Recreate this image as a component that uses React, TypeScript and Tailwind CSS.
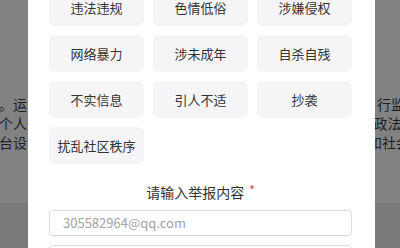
import React from "react";

const font = { fontFamily: '"Noto Sans CJK SC", "Noto Sans", sans-serif' };

const tags = [
  "违法违规",
  "色情低俗",
  "涉嫌侵权",
  "网络暴力",
  "涉未成年",
  "自杀自残",
  "不实信息",
  "引人不适",
  "抄袭",
  "扰乱社区秩序",
];

export default function App() {
  return (
    <div
      className="w-[400px] h-[248px] overflow-hidden flex bg-[#808080]"
      style={font}
    >
      {/* left background strip */}
      <div className="w-[28px] shrink-0 flex flex-col overflow-hidden">
        <div className="h-[203px] bg-[#828282] flex flex-col pt-[95px] text-[14px] leading-[19px] text-[#1e1e1e] whitespace-nowrap">
          <div className="flex justify-end pr-[1px]">。运</div>
          <div className="flex justify-end pr-[1px]">个人</div>
          <div className="flex justify-end pr-[1px]">台设</div>
        </div>
        <div className="flex-1 bg-[#7a7a7a]" />
      </div>

      {/* modal */}
      <div className="w-[347px] shrink-0 bg-white pl-[21px]">
        <div className="w-[303px] grid grid-cols-3 gap-x-[9px] gap-y-[9px] -mt-[11px]">
          {tags.map((t) => (
            <div
              key={t}
              className="h-[37px] rounded-[6px] bg-[#f5f5f7] flex items-center justify-center text-[13px] text-[#333333]"
            >
              {t}
            </div>
          ))}
        </div>
        <div className="w-[303px] mt-[18px] h-[20px] flex justify-center items-center text-[14px] text-[#333333] leading-[20px]">
          <span>请输入举报内容</span>
          <span className="ml-[5px] text-[12px] text-[#d93a3a] leading-none self-start mt-[2px]">
            *
          </span>
        </div>
        <div className="w-[303px] h-[26px] mt-[8px] rounded-[4px] border border-[#dcdcdc] flex items-center pl-[13px] text-[13px] text-[#a3a3a3]">
          305582964@qq.com
        </div>
        <div className="w-[303px] h-[26px] mt-[9px] rounded-[4px] border border-[#dcdcdc]" />
      </div>

      {/* right background strip */}
      <div className="flex-1 flex flex-col overflow-hidden">
        <div className="h-[203px] bg-[#828282] flex flex-col pt-[95px] text-[14px] leading-[19px] text-[#1e1e1e] whitespace-nowrap">
          <div className="pl-[2px]">行监</div>
          <div className="-ml-[10px]">r 政法</div>
          <div className="-ml-[7px]">和社会</div>
        </div>
        <div className="flex-1 bg-[#7a7a7a]" />
      </div>
    </div>
  );
}
